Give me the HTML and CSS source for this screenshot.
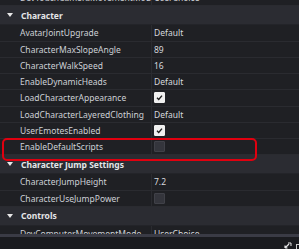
FILE: index.html
```html
<!DOCTYPE html>
<html lang="en">
<head>
    <meta charset="UTF-8">
    <title>Properties</title>
    <link rel="stylesheet" href="styles.css">
</head>
<body>
    <div class="panel">
        <div class="list">
            <div class="row"><div class="name">DevTouchCameraMovementMode</div><div class="value">UserChoice</div></div>

            <div class="group">
                <svg class="caret" width="6" height="4" viewBox="0 0 6 4"><polygon points="0,0 6,0 3,4" fill="#e8e8e8"/></svg>
                <span>Character</span>
            </div>
            <div class="row"><div class="name">AvatarJointUpgrade</div><div class="value">Default</div></div>
            <div class="row"><div class="name">CharacterMaxSlopeAngle</div><div class="value">89</div></div>
            <div class="row"><div class="name">CharacterWalkSpeed</div><div class="value">16</div></div>
            <div class="row"><div class="name">EnableDynamicHeads</div><div class="value">Default</div></div>
            <div class="row"><div class="name">LoadCharacterAppearance</div><div class="value"><span class="check on"><svg width="9" height="9" viewBox="0 0 9 9"><path d="M2 4.8 L3.7 6.4 L7 2.6" fill="none" stroke="#1c1c1c" stroke-width="1.4"/></svg></span></div></div>
            <div class="row"><div class="name">LoadCharacterLayeredClothing</div><div class="value">Default</div></div>
            <div class="row"><div class="name">UserEmotesEnabled</div><div class="value"><span class="check on"><svg width="9" height="9" viewBox="0 0 9 9"><path d="M2 4.8 L3.7 6.4 L7 2.6" fill="none" stroke="#1c1c1c" stroke-width="1.4"/></svg></span></div></div>
            <div class="row highlight">
                <div class="name">EnableDefaultScripts</div><div class="value"><span class="check"></span></div>
                <div class="mark"></div>
            </div>

            <div class="group">
                <svg class="caret" width="6" height="4" viewBox="0 0 6 4"><polygon points="0,0 6,0 3,4" fill="#e8e8e8"/></svg>
                <span>Character Jump Settings</span>
            </div>
            <div class="row"><div class="name">CharacterJumpHeight</div><div class="value">7.2</div></div>
            <div class="row"><div class="name">CharacterUseJumpPower</div><div class="value"><span class="check"></span></div></div>

            <div class="group">
                <svg class="caret" width="6" height="4" viewBox="0 0 6 4"><polygon points="0,0 6,0 3,4" fill="#e8e8e8"/></svg>
                <span>Controls</span>
            </div>
            <div class="row"><div class="name">DevComputerMovementMode</div><div class="value">UserChoice</div></div>
        </div>
        <div class="footer">
            <svg class="dock" width="8" height="7" viewBox="0 0 8 7"><path d="M1 6 L5 2 M1 6 L1 3.5 M1 6 L3.5 6" fill="none" stroke="#e6e6e6" stroke-width="1.2"/><path d="M4 1 H7 V4" fill="none" stroke="#e6e6e6" stroke-width="1"/></svg>
            <span class="more"></span>
        </div>
    </div>
</body>
</html>
```

FILE: styles.css
```css
html, body {
    margin: 0;
    padding: 0;
    background: #1c1d21;
}

.panel {
    width: 299px;
    height: 249px;
    display: flex;
    flex-direction: column;
    overflow: hidden;
    font-family: "Noto Sans", "Open Sans", sans-serif;
    font-size: 8.5px;
    color: #cdd0d6;
}

.list {
    flex: 1;
    overflow: hidden;
    background: #1f2024;
}

.list > .row:first-child {
    margin-top: -10px;
}

.row {
    position: relative;
    display: flex;
    height: 16.25px;
    box-sizing: border-box;
    border-bottom: 1px solid #2a2b30;
}

.name {
    width: 152px;
    padding-left: 20px;
    box-sizing: border-box;
    display: flex;
    align-items: center;
    border-right: 1px solid #2a2b30;
    white-space: nowrap;
    overflow: hidden;
}

.value {
    flex: 1;
    padding-left: 2px;
    display: flex;
    align-items: center;
    white-space: nowrap;
    color: #d6d8dd;
}

.group {
    height: 19px;
    display: flex;
    align-items: center;
    gap: 8px;
    padding-left: 7px;
    box-sizing: border-box;
    background: #2b2c32;
    font-weight: bold;
    color: #e4e5e8;
    border-bottom: 1px solid #232429;
}

.check {
    width: 11px;
    height: 11px;
    box-sizing: border-box;
    border-radius: 1px;
    background: #34353c;
    border: 1px solid #404148;
    display: flex;
    align-items: center;
    justify-content: center;
}

.check.on {
    background: #f0f0f0;
    border-color: #f0f0f0;
}

.highlight .mark {
    position: absolute;
    left: 2px;
    top: -1px;
    width: 255px;
    height: 23px;
    box-sizing: border-box;
    border: 2px solid #e0000f;
    border-radius: 5px;
}

.footer {
    height: 12px;
    background: #1a1b1f;
    border-top: 3px solid #3a3b45;
    display: flex;
    align-items: flex-end;
    justify-content: flex-end;
    gap: 4px;
}

.dock {
    display: block;
}

.more {
    width: 3px;
    height: 5px;
    border-left: 1px solid #d0d0d0;
    border-top: 1px solid #d0d0d0;
    box-sizing: border-box;
}
```
